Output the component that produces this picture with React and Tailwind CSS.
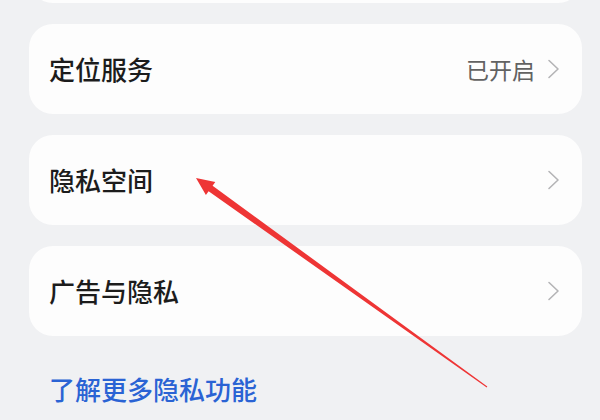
export default function App() {
  const rows = [
    { title: "定位服务", value: "已开启" },
    { title: "隐私空间" },
    { title: "广告与隐私" },
  ];

  return (
    <div
      className="relative w-[600px] h-[420px] overflow-hidden bg-[#f0f1f3] pl-[29px] pr-[18px]"
      style={{ fontFamily: '"Noto Sans CJK SC", "Noto Sans", sans-serif' }}
    >
      <div className="flex flex-col gap-[21px]">
        {/* previous card, mostly scrolled out */}
        <div className="-mt-[87px] h-[90px] rounded-[24px] bg-[#fdfdfd]" />

        {rows.map((row) => (
          <div
            key={row.title}
            className="flex h-[90px] items-center justify-between rounded-[24px] bg-[#fdfdfd] pl-[20px] pr-[22px]"
          >
            <span className="text-[26px] leading-none font-medium text-[#1c1c1c]">
              {row.title}
            </span>
            <div className="flex items-center gap-[12px]">
              {row.value && (
                <span className="text-[23px] leading-none text-[#626262]">
                  {row.value}
                </span>
              )}
              <svg width="13" height="20" viewBox="0 0 13 20" fill="none">
                <path
                  d="M2 1.5 L11 10 L2 18.5"
                  stroke="#b4b4b6"
                  strokeWidth="1.6"
                  strokeLinecap="round"
                  strokeLinejoin="round"
                />
              </svg>
            </div>
          </div>
        ))}
      </div>

      <div className="mt-[40px] pl-[20px] text-[26px] leading-[26px] font-medium text-[#2a63d4]">
        了解更多隐私功能
      </div>

      {/* red annotation arrow */}
      <svg
        className="pointer-events-none absolute left-0 top-0"
        width="600"
        height="420"
        viewBox="0 0 600 420"
      >
        <polygon
          points="196,178 215.3,182 212.6,185.7 487.3,386.6 486.7,387.4 208.6,191.3 205.9,195"
          fill="#ee3535"
        />
      </svg>
    </div>
  );
}
